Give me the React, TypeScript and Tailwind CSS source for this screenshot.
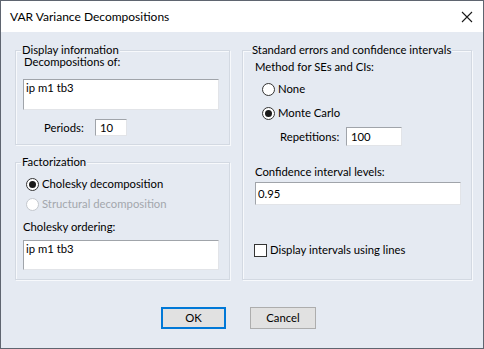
import React from "react";

const font = "font-['Segoe_UI',Lato,sans-serif]";

function Radio({ label, checked, disabled }: { label: string; checked?: boolean; disabled?: boolean }) {
  return (
    <div className="flex h-[16px] items-center gap-[3px] whitespace-nowrap">
      <span
        className={`flex h-[13px] w-[13px] items-center justify-center rounded-full border bg-white ${
          disabled ? "border-[#c4c8ce]" : "border-[#333333]"
        }`}
      >
        {checked && <span className="h-[7px] w-[7px] rounded-full bg-[#1a1a1a]" />}
      </span>
      <span className={disabled ? "text-[#a3a7ad]" : "text-black"}>{label}</span>
    </div>
  );
}

function Group({
  title,
  titleClass,
  className,
  children,
}: {
  title: string;
  titleClass: string;
  className: string;
  children: React.ReactNode;
}) {
  return (
    <div
      className={`relative border border-[#d3d9e2] shadow-[inset_1px_1px_0_#f7f9fc,1px_1px_0_#f7f9fc] ${className}`}
    >
      <span className={`absolute whitespace-nowrap bg-[#e5eaf2] px-[1px] leading-[12px] ${titleClass}`}>{title}</span>
      {children}
    </div>
  );
}

const sunken = "border border-[#a0a4aa] border-b-[#e2e4e8] border-r-[#e2e4e8] bg-white";

export default function App() {
  return (
    <div className={`flex h-[349px] w-[484px] flex-col border border-[#5f6570] bg-[#e5eaf2] text-[11.3px] text-black ${font}`}>
      <div className="flex h-[31px] shrink-0 items-center justify-between bg-white pl-[9px] pr-[10px]">
        <span className="text-[12px] leading-[16px]">VAR Variance Decompositions</span>
        <svg width="12" height="12" viewBox="0 0 12 12" className="mt-[1px]">
          <path d="M1 1 L11 11 M11 1 L1 11" stroke="#1a1a1a" strokeWidth="1.1" />
        </svg>
      </div>

      <div className="flex flex-col pl-[14px] pt-[18px]">
        <div className="flex gap-[12px]">
          <div className="flex w-[215px] flex-col">
            <Group title="Display information" titleClass="left-[5px] top-[-7px]" className="h-[95px]">
              <div className="mt-[5px] pl-[8px] leading-[12px]">Decompositions of:</div>
              <div className={`ml-[7px] mt-[11px] h-[31px] w-[196px] px-[2px] leading-[16px] ${sunken}`}>ip m1 tb3</div>
              <div className="mt-[9px] flex h-[17px] items-center pl-[28px]">
                <span className="w-[51px] leading-[12px]">Periods:</span>
                <span className={`h-[17px] w-[32px] px-[4px] leading-[15px] ${sunken}`}>10</span>
              </div>
            </Group>

            <Group title="Factorization" titleClass="left-[5px] top-[-7px]" className="mt-[17px] h-[118px]">
              <div className="mt-[13px] flex flex-col gap-[4px] pl-[10px]">
                <Radio label="Cholesky decomposition" checked />
                <Radio label="Structural decomposition" disabled />
              </div>
              <div className="mt-[9px] pl-[7px] leading-[12px]">Cholesky ordering:</div>
              <div className={`ml-[7px] mt-[7px] h-[30px] w-[196px] px-[2px] leading-[16px] ${sunken}`}>ip m1 tb3</div>
            </Group>
          </div>

          <Group
            title="Standard errors and confidence intervals"
            titleClass="left-[8px] top-[-7px]"
            className="h-[230px] w-[230px]"
          >
            <div className="mt-[10px] pl-[12px] leading-[12px]">Method for SEs and CIs:</div>
            <div className="mt-[8px] pl-[19px]">
              <Radio label="None" />
            </div>
            <div className="mt-[8px] pl-[19px]">
              <Radio label="Monte Carlo" checked />
            </div>
            <div className="mt-[6px] flex h-[19px] items-center pl-[37px]">
              <span className="w-[66px] leading-[12px]">Repetitions:</span>
              <span className={`h-[19px] w-[56px] px-[4px] leading-[17px] ${sunken}`}>100</span>
            </div>
            <div className="mt-[20px] pl-[12px] leading-[12px]">Confidence interval levels:</div>
            <div className={`ml-[12px] mt-[4px] h-[23px] w-[206px] px-[2px] leading-[21px] ${sunken}`}>0.95</div>
            <div className="mt-[37px] flex h-[16px] items-center gap-[3px] pl-[11px]">
              <span className="h-[13px] w-[13px] border border-[#333333] bg-white" />
              <span>Display intervals using lines</span>
            </div>
          </Group>
        </div>

        <div className="mt-[27px] flex gap-[24px] pl-[146px]">
          <button className="h-[22px] w-[65px] border-2 border-[#0078d7] bg-[#e1e1e1] leading-[18px]">OK</button>
          <button className="h-[22px] w-[66px] border border-[#adadad] bg-[#e1e1e1] leading-[20px]">Cancel</button>
        </div>
      </div>
    </div>
  );
}
